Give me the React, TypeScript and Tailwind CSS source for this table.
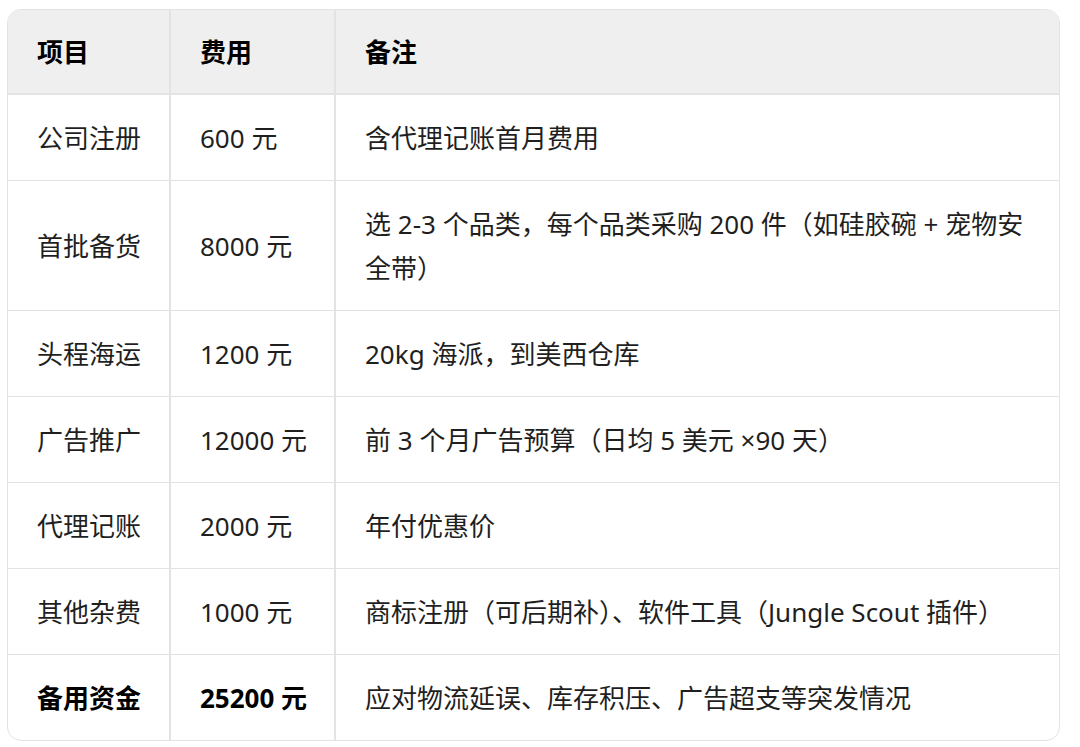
const rows = [
  { name: "公司注册", cost: "600 元", note: "含代理记账首月费用" },
  {
    name: "首批备货",
    cost: "8000 元",
    note: "选 2-3 个品类，每个品类采购 200 件（如硅胶碗 + 宠物安全带）",
  },
  { name: "头程海运", cost: "1200 元", note: "20kg 海派，到美西仓库" },
  { name: "广告推广", cost: "12000 元", note: "前 3 个月广告预算（日均 5 美元 ×90 天）" },
  { name: "代理记账", cost: "2000 元", note: "年付优惠价" },
  { name: "其他杂费", cost: "1000 元", note: "商标注册（可后期补）、软件工具（Jungle Scout 插件）" },
];

const cell = "pl-[29px] pr-[30px] pt-[21px] pb-[20px] align-middle";
const narrow = "pl-[29px] pr-0 pt-[21px] pb-[20px] align-middle whitespace-nowrap";
const head = "pl-[29px] pr-0 pt-[20px] pb-[19px] align-middle whitespace-nowrap font-bold text-black";

export default function App() {
  return (
    <div
      className="w-[1080px] h-[747px] bg-white pt-[9px] pl-[7px]"
      style={{ fontFamily: '"Noto Sans", "Noto Sans CJK SC", sans-serif' }}
    >
      <div className="w-[1053px] rounded-[14px] border border-[#e3e3e3] overflow-hidden">
        <table className="w-full table-fixed border-collapse text-[26px] leading-[44px] text-[#1f1f1f] text-left">
          <colgroup>
            <col className="w-[162px]" />
            <col className="w-[165px]" />
            <col />
          </colgroup>
          <thead>
            <tr className="bg-[#efefef] border-b-2 border-[#e3e3e3]">
              <th className={head}>项目</th>
              <th className={`${head} border-l-2 border-[#e3e3e3]`}>费用</th>
              <th className={`${head} border-l-2 border-[#e3e3e3]`}>备注</th>
            </tr>
          </thead>
          <tbody>
            {rows.map((r) => (
              <tr key={r.name} className="border-b border-[#e3e3e3]">
                <td className={narrow}>{r.name}</td>
                <td className={`${narrow} border-l-2 border-[#e3e3e3]`}>{r.cost}</td>
                <td className={`${cell} border-l-2 border-[#e3e3e3]`}>{r.note}</td>
              </tr>
            ))}
            <tr>
              <td className={`${narrow} font-bold text-black`}>备用资金</td>
              <td className={`${narrow} font-bold text-black border-l-2 border-[#e3e3e3]`}>25200 元</td>
              <td className={`${cell} border-l-2 border-[#e3e3e3]`}>应对物流延误、库存积压、广告超支等突发情况</td>
            </tr>
          </tbody>
        </table>
      </div>
    </div>
  );
}
